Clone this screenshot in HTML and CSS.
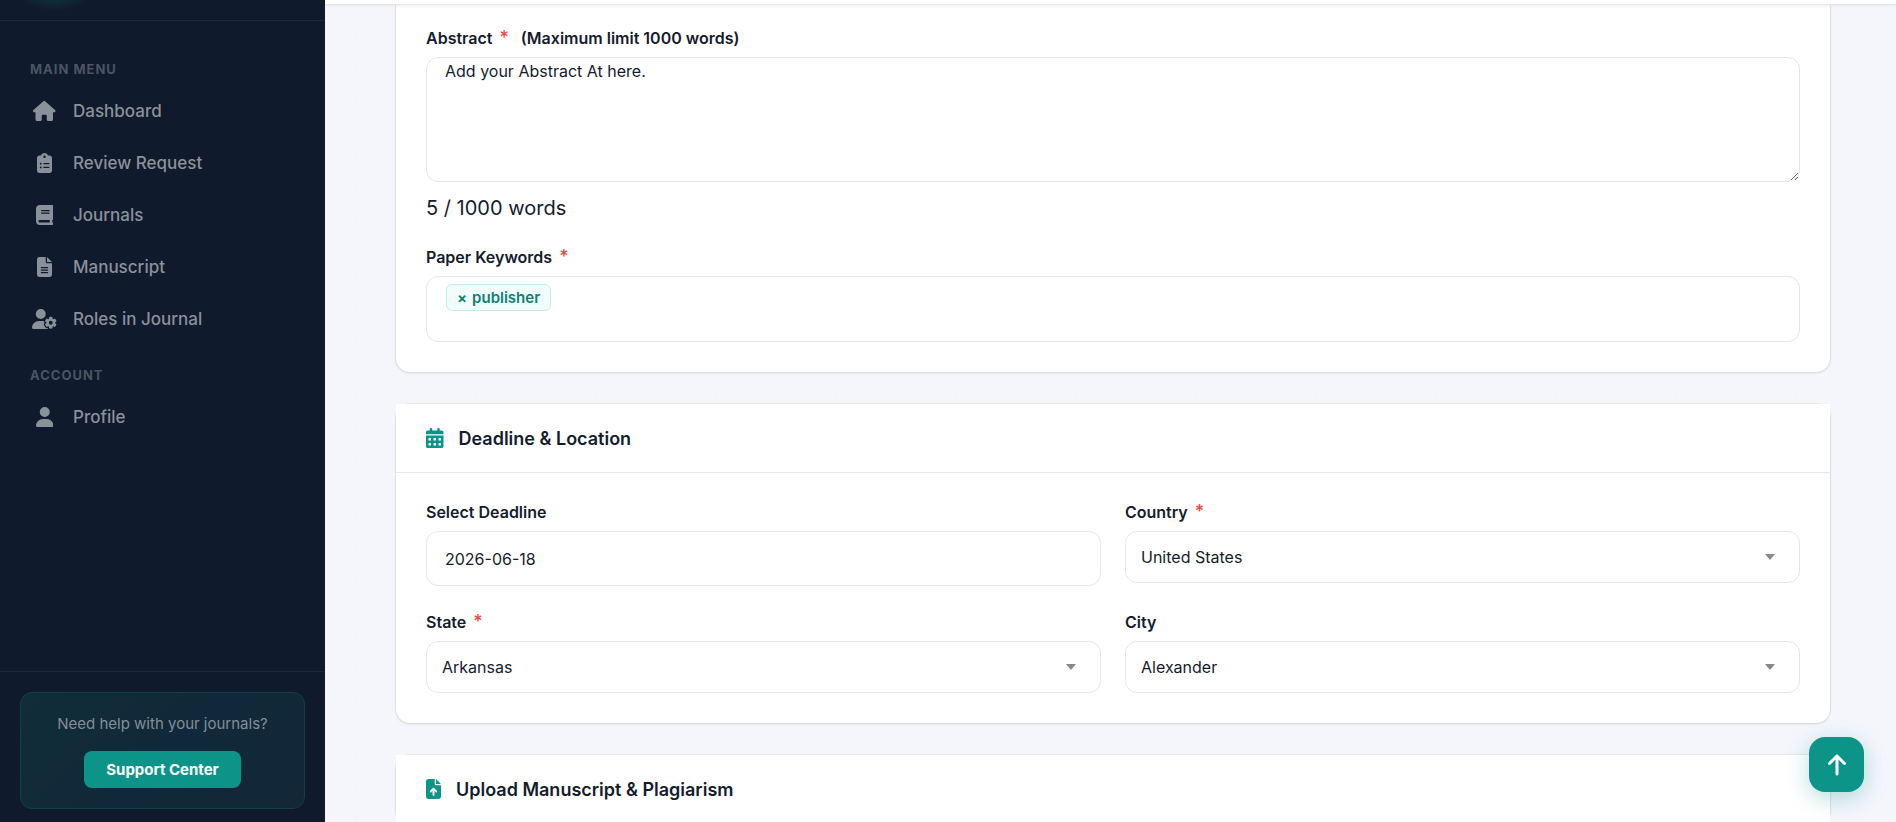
FILE: index.html
```html
<!DOCTYPE html>
<html lang="en">
<head>
  <meta charset="UTF-8" />
  <meta name="viewport" content="width=device-width, initial-scale=1.0" />
  <title>Submit Manuscript</title>
  <link rel="stylesheet" href="styles.css">
</head>
<body>
  <aside class="sidebar">
    <div class="sidebar-brand"></div>

    <nav class="sidebar-nav">
      <p class="nav-title">Main Menu</p>
      <a class="nav-link" href="#">
        <span class="nav-icon"><svg viewBox="0 0 576 512"><path d="M575.8 255.5c0 18-15 32.1-32 32.1h-32l.7 160.2c0 2.7-.2 5.4-.5 8.1V472c0 22.1-17.9 40-40 40H456c-1.1 0-2.2 0-3.3-.1c-1.4 .1-2.8 .1-4.2 .1H416 392c-22.1 0-40-17.9-40-40V448 384c0-17.7-14.3-32-32-32H256c-17.7 0-32 14.3-32 32v64 24c0 22.1-17.9 40-40 40H160 128.1c-1.5 0-3-.1-4.5-.2c-1.2 .1-2.4 .2-3.6 .2H104c-22.1 0-40-17.9-40-40V360c0-.9 0-1.9 .1-2.8V287.6H32c-18 0-32-14-32-32.1c0-9 3-17 10-24L266.4 8c7-7 15-8 22-8s15 2 21 7L564.8 231.5c8 7 12 15 11 24z"/></svg></span>
        Dashboard
      </a>
      <a class="nav-link" href="#">
        <span class="nav-icon"><svg viewBox="0 0 384 512"><path d="M192 0c-41.8 0-77.4 26.7-90.5 64H64C28.7 64 0 92.7 0 128V448c0 35.3 28.7 64 64 64H320c35.3 0 64-28.7 64-64V128c0-35.3-28.7-64-64-64H282.5C269.4 26.7 233.8 0 192 0zm0 64a32 32 0 1 1 0 64 32 32 0 1 1 0-64zM72 272a24 24 0 1 1 48 0 24 24 0 1 1 -48 0zm104-16H304c8.8 0 16 7.2 16 16s-7.2 16-16 16H176c-8.8 0-16-7.2-16-16s7.2-16 16-16zM72 368a24 24 0 1 1 48 0 24 24 0 1 1 -48 0zm88 0c0-8.8 7.2-16 16-16H304c8.8 0 16 7.2 16 16s-7.2 16-16 16H176c-8.8 0-16-7.2-16-16z"/></svg></span>
        Review Request
      </a>
      <a class="nav-link" href="#">
        <span class="nav-icon"><svg viewBox="0 0 448 512"><path d="M96 0C43 0 0 43 0 96V416c0 53 43 96 96 96H384h32c17.7 0 32-14.3 32-32s-14.3-32-32-32V384c17.7 0 32-14.3 32-32V32c0-17.7-14.3-32-32-32H384 96zm0 384H352v64H96c-17.7 0-32-14.3-32-32s14.3-32 32-32zm32-240c0-8.8 7.2-16 16-16H336c8.8 0 16 7.2 16 16s-7.2 16-16 16H144c-8.8 0-16-7.2-16-16zm16 48H336c8.8 0 16 7.2 16 16s-7.2 16-16 16H144c-8.8 0-16-7.2-16-16s7.2-16 16-16z"/></svg></span>
        Journals
      </a>
      <a class="nav-link" href="#">
        <span class="nav-icon"><svg viewBox="0 0 384 512"><path d="M64 0C28.7 0 0 28.7 0 64V448c0 35.3 28.7 64 64 64H320c35.3 0 64-28.7 64-64V160H256c-17.7 0-32-14.3-32-32V0H64zM256 0V128H384L256 0zM112 256H272c8.8 0 16 7.2 16 16s-7.2 16-16 16H112c-8.8 0-16-7.2-16-16s7.2-16 16-16zm0 64H272c8.8 0 16 7.2 16 16s-7.2 16-16 16H112c-8.8 0-16-7.2-16-16s7.2-16 16-16zm0 64H272c8.8 0 16 7.2 16 16s-7.2 16-16 16H112c-8.8 0-16-7.2-16-16s7.2-16 16-16z"/></svg></span>
        Manuscript
      </a>
      <a class="nav-link" href="#">
        <span class="nav-icon"><svg viewBox="0 0 640 512"><path d="M224 0a128 128 0 1 1 0 256A128 128 0 1 1 224 0zM178.3 304h91.4c11.8 0 23.4 1.2 34.5 3.3c-2.1 18.5 7.4 35.6 21.8 44.8c-16.6 10.6-26.7 31.6-20 53.3c4 12.9 9.4 25.5 16.4 37.6s15.2 23.1 24.4 33c15.7 16.9 39.6 18.4 57.2 8.7v.9c0 9.2 2.7 18.5 7.9 26.3H29.7C13.3 512 0 498.7 0 482.3C0 383.8 79.8 304 178.3 304zM436 218.2c0-7 4.5-13.3 11.3-14.8c10.5-2.4 21.5-3.7 32.7-3.7s22.2 1.3 32.7 3.7c6.8 1.5 11.3 7.8 11.3 14.8v30.6c7.9 3.4 15.4 7.7 22.3 12.8l24.9-14.3c6.1-3.5 13.7-2.7 18.5 2.4c7.6 8.1 14.3 17.2 20.1 27.2s10.3 20.4 13.5 31c2.1 6.7-1.1 13.7-7.2 17.2l-25 14.4c.4 4 .7 8.1 .7 12.3s-.2 8.2-.7 12.3l25 14.4c6.1 3.5 9.2 10.5 7.2 17.2c-3.3 10.6-7.8 21-13.5 31s-12.5 19.1-20.1 27.2c-4.8 5.1-12.5 5.9-18.5 2.4l-24.9-14.3c-6.9 5.1-14.3 9.4-22.3 12.8l0 30.6c0 7-4.5 13.3-11.3 14.8c-10.5 2.4-21.5 3.7-32.7 3.7s-22.2-1.3-32.7-3.7c-6.8-1.5-11.3-7.8-11.3-14.8V454.8c-8-3.4-15.6-7.7-22.5-12.9l-24.7 14.3c-6.1 3.5-13.7 2.7-18.5-2.4c-7.6-8.1-14.3-17.2-20.1-27.2s-10.3-20.4-13.5-31c-2.1-6.7 1.1-13.7 7.2-17.2l24.8-14.3c-.4-4.1-.7-8.2-.7-12.4s.2-8.3 .7-12.4L343.8 325c-6.1-3.5-9.2-10.5-7.2-17.2c3.3-10.6 7.7-21 13.5-31s12.5-19.1 20.1-27.2c4.8-5.1 12.4-5.9 18.5-2.4l24.8 14.3c6.9-5.1 14.5-9.4 22.5-12.9V218.2zm92.1 133.5a48.1 48.1 0 1 0 -96.1 0 48.1 48.1 0 1 0 96.1 0z"/></svg></span>
        Roles in Journal
      </a>

      <p class="nav-title">Account</p>
      <a class="nav-link" href="#">
        <span class="nav-icon"><svg viewBox="0 0 448 512"><path d="M224 256A128 128 0 1 0 224 0a128 128 0 1 0 0 256zm-45.7 48C79.8 304 0 383.8 0 482.3C0 498.7 13.3 512 29.7 512H418.3c16.4 0 29.7-13.3 29.7-29.7C448 383.8 368.2 304 269.7 304H178.3z"/></svg></span>
        Profile
      </a>
    </nav>

    <div class="sidebar-footer">
      <div class="support-box">
        <p>Need help with your journals?</p>
        <a class="support-btn" href="#">Support Center</a>
      </div>
    </div>
  </aside>

  <div class="content">
    <header class="topbar"></header>

    <form class="main">
      <section class="card card-abstract">
        <div class="field">
          <label for="abstract">Abstract <span class="required">*</span> <span class="hint">(Maximum limit 1000 words)</span></label>
          <textarea id="abstract" class="control">Add your Abstract At here.</textarea>
          <p class="word-count">5 / 1000 words</p>
        </div>
        <div class="field">
          <label for="keywords">Paper Keywords <span class="required">*</span></label>
          <div class="control tags">
            <span class="tag"><button type="button" aria-label="Remove">×</button>publisher</span>
            <input type="text" id="keywords">
          </div>
        </div>
      </section>

      <section class="card">
        <h2 class="card-header">
          <svg viewBox="0 0 448 512"><path d="M128 0c17.7 0 32 14.3 32 32V64H288V32c0-17.7 14.3-32 32-32s32 14.3 32 32V64h48c26.5 0 48 21.5 48 48v48H0V112C0 85.5 21.5 64 48 64H96V32c0-17.7 14.3-32 32-32zM0 192H448V464c0 26.5-21.5 48-48 48H48c-26.5 0-48-21.5-48-48V192zm64 80v32c0 8.8 7.2 16 16 16h32c8.8 0 16-7.2 16-16V272c0-8.8-7.2-16-16-16H80c-8.8 0-16 7.2-16 16zm128 0v32c0 8.8 7.2 16 16 16h32c8.8 0 16-7.2 16-16V272c0-8.8-7.2-16-16-16H208c-8.8 0-16 7.2-16 16zm144-16c-8.8 0-16 7.2-16 16v32c0 8.8 7.2 16 16 16h32c8.8 0 16-7.2 16-16V272c0-8.8-7.2-16-16-16H336zM64 400v32c0 8.8 7.2 16 16 16h32c8.8 0 16-7.2 16-16V400c0-8.8-7.2-16-16-16H80c-8.8 0-16 7.2-16 16zm144-16c-8.8 0-16 7.2-16 16v32c0 8.8 7.2 16 16 16h32c8.8 0 16-7.2 16-16V400c0-8.8-7.2-16-16-16H208zm112 16v32c0 8.8 7.2 16 16 16h32c8.8 0 16-7.2 16-16V400c0-8.8-7.2-16-16-16H336c-8.8 0-16 7.2-16 16z"/></svg>
          Deadline &amp; Location
        </h2>
        <div class="card-body">
          <div class="field">
            <label for="deadline">Select Deadline</label>
            <input type="text" id="deadline" class="control" value="2026-06-18">
          </div>
          <div class="field">
            <label for="country">Country <span class="required">*</span></label>
            <div class="select-wrap">
              <select id="country" class="control"><option>United States</option></select>
            </div>
          </div>
          <div class="field">
            <label for="state">State <span class="required">*</span></label>
            <div class="select-wrap">
              <select id="state" class="control"><option>Arkansas</option></select>
            </div>
          </div>
          <div class="field">
            <label for="city">City</label>
            <div class="select-wrap">
              <select id="city" class="control"><option>Alexander</option></select>
            </div>
          </div>
        </div>
      </section>

      <section class="card">
        <h2 class="card-header">
          <svg viewBox="0 0 384 512"><path d="M64 0C28.7 0 0 28.7 0 64V448c0 35.3 28.7 64 64 64H320c35.3 0 64-28.7 64-64V160H256c-17.7 0-32-14.3-32-32V0H64zM256 0V128H384L256 0zM216 408c0 13.3-10.7 24-24 24s-24-10.7-24-24V305.9l-31 31c-9.4 9.4-24.6 9.4-33.9 0s-9.4-24.6 0-33.9l72-72c9.4-9.4 24.6-9.4 33.9 0l72 72c9.4 9.4 9.4 24.6 0 33.9s-24.6 9.4-33.9 0l-31-31V408z"/></svg>
          Upload Manuscript &amp; Plagiarism
        </h2>
      </section>
    </form>
  </div>

  <button type="button" class="scroll-top" aria-label="Back to top">
    <svg viewBox="0 0 384 512"><path d="M214.6 41.4c-12.5-12.5-32.8-12.5-45.3 0l-160 160c-12.5 12.5-12.5 32.8 0 45.3s32.8 12.5 45.3 0L160 141.2V448c0 17.7 14.3 32 32 32s32-14.3 32-32V141.2L329.4 246.6c12.5 12.5 32.8 12.5 45.3 0s12.5-32.8 0-45.3l-160-160z"/></svg>
  </button>
</body>
</html>
```
FILE: styles.css
```css
* {
  box-sizing: border-box;
  margin: 0;
  padding: 0;
}
body {
  display: flex;
  height: 100vh;
  overflow: hidden;
  font-family: Inter, "Open Sans", sans-serif;
  font-size: 16px;
  color: #141c2e;
  background-color: #f4f6fb;
}
a {
  text-decoration: none;
}
svg {
  display: block;
  fill: currentColor;
}

/* Sidebar */
.sidebar {
  display: flex;
  flex-direction: column;
  flex: 0 0 325px;
  background-color: #0f1a2c;
}
.sidebar-brand {
  height: 21px;
  border-bottom: 1px solid #1d2839;
  background: radial-gradient(ellipse 36px 14px at 55px -3px, rgba(13, 148, 136, 0.2), transparent);
}
.sidebar-nav {
  flex: 1;
  padding: 36px 20px 0;
}
.nav-title {
  padding: 0 10px;
  margin-bottom: 6px;
  font-size: 13px;
  line-height: 24px;
  font-weight: 700;
  letter-spacing: 1px;
  text-transform: uppercase;
  color: #4b5462;
}
.nav-link {
  display: flex;
  align-items: center;
  gap: 16px;
  height: 48px;
  padding: 0 12px;
  margin-bottom: 4px;
  font-size: 17px;
  font-weight: 500;
  color: #8b9199;
}
.nav-link + .nav-title {
  margin-top: 20px;
}
.nav-icon {
  display: flex;
  justify-content: center;
  width: 25px;
}
.nav-icon svg {
  flex: none;
  height: 20px;
}
.sidebar-footer {
  padding: 20px 20px 13px;
  border-top: 1px solid #1b2638;
}
.support-box {
  padding: 19px;
  text-align: center;
  border: 1px solid #123f48;
  border-radius: 12px;
  background: linear-gradient(135deg, #112d38, #10293a 50%, #132737);
}
.support-box p {
  margin-bottom: 15px;
  font-size: 15px;
  line-height: 24px;
  color: #848e96;
}
.support-btn {
  display: inline-block;
  padding: 0 22px;
  margin-bottom: 1px;
  font-size: 15px;
  line-height: 37px;
  font-weight: 700;
  color: #fff;
  border-radius: 8px;
  background-color: #0d9488;
  vertical-align: top;
}

/* Content */
.content {
  flex: 1;
  min-width: 0;
  background-image: radial-gradient(circle at 1px 1px, #f0f2f7 1px, transparent 1px);
  background-size: 30px 30px;
  background-position: 0 7px;
}
.topbar {
  position: relative;
  height: 5px;
  background-color: #fff;
  border-bottom: 1px solid #e4e6ec;
  box-shadow: 0 1px 3px rgba(15, 23, 42, 0.06);
}
.main {
  padding: 0 66px 0 71px;
}
.card {
  margin-bottom: 32px;
  background-color: #fff;
  border-radius: 14px;
  box-shadow: 0 0 0 1px rgba(15, 23, 42, 0.05), 0 1px 3px rgba(15, 23, 42, 0.1);
}
.card-abstract {
  padding: 21px 30px 30px;
  border-radius: 0 0 14px 14px;
}
.card-abstract .field + .field {
  margin-top: 22px;
}
.card-header {
  display: flex;
  align-items: center;
  gap: 15px;
  height: 69px;
  padding: 0 30px;
  font-size: 18px;
  font-weight: 600;
  background-color: #fff;
  border-bottom: 1px solid #e4e6ec;
}
.card-header svg {
  height: 20px;
  color: #0d9488;
}
.card-body {
  display: grid;
  grid-template-columns: 1fr 1fr;
  gap: 24px;
  padding: 27px 30px 30px;
}

/* Form */
label {
  display: block;
  margin-bottom: 7px;
  font-size: 16px;
  line-height: 24px;
  font-weight: 600;
}
.required {
  margin-left: 3px;
  font-size: 18px;
  line-height: 20px;
  font-weight: 500;
  color: #ef4444;
}
.hint {
  margin-left: 8px;
}
.control {
  display: block;
  width: 100%;
  font-family: inherit;
  font-size: 16px;
  color: #141c2e;
  background-color: #fff;
  border: 1px solid #e4e6ea;
  border-radius: 12px;
}
input.control {
  height: 55px;
  padding: 0 18px;
}
textarea.control {
  height: 125px;
  padding: 1px 18px;
  line-height: 24px;
  resize: vertical;
}
.select-wrap {
  position: relative;
}
.select-wrap::after {
  content: "";
  position: absolute;
  top: 50%;
  right: 25px;
  margin-top: -3px;
  border: 5px solid transparent;
  border-top: 6px solid #888;
  border-bottom: 0;
  pointer-events: none;
}
select.control {
  height: 52px;
  padding: 0 15px;
  appearance: none;
}
.word-count {
  margin-top: 11px;
  font-size: 20px;
  line-height: 30px;
}
.tags {
  display: flex;
  align-items: flex-start;
  gap: 8px;
  height: 66px;
  padding: 7px 19px;
}
.tags input {
  flex: 1;
  height: 27px;
  border: 0;
  outline: 0;
  background: none;
}
.tag {
  display: flex;
  align-items: center;
  gap: 5px;
  height: 27px;
  padding: 0 10px;
  font-size: 15px;
  font-weight: 600;
  color: #0f7f75;
  background-color: #f0fdfa;
  border: 1px solid #c5ede6;
  border-radius: 6px;
}
.tag button {
  font: inherit;
  color: inherit;
  border: 0;
  background: none;
}

.scroll-top {
  display: flex;
  align-items: center;
  justify-content: center;
  position: fixed;
  right: 32px;
  bottom: 30px;
  width: 55px;
  height: 55px;
  color: #fff;
  border: 0;
  border-radius: 16px;
  background-color: #0d9488;
  box-shadow: 0 6px 22px rgba(13, 148, 136, 0.3);
}
.scroll-top svg {
  height: 24px;
}
```
